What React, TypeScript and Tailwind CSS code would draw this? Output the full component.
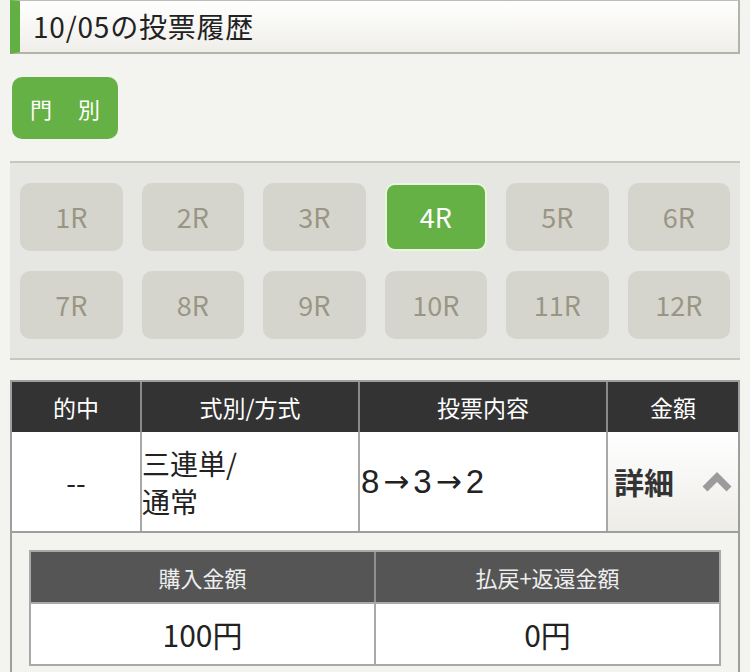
const RACES = ['1R', '2R', '3R', '4R', '5R', '6R', '7R', '8R', '9R', '10R', '11R', '12R'];
const ACTIVE = '4R';

const JP = { fontFamily: '"Noto Sans CJK JP", "Noto Sans", sans-serif' };

function ChevronUp() {
  return (
    <svg width="30" height="20" viewBox="0 0 30 20" className="shrink-0">
      <polyline points="3,17 15,5 27,17" fill="none" stroke="#9b9b9b" strokeWidth="7" strokeLinejoin="miter" />
    </svg>
  );
}

function Arrow() {
  return <span style={{ fontFamily: '"DejaVu Sans", sans-serif' }} className="text-[31px] mx-[4px]">→</span>;
}

export default function App() {
  return (
    <div className="w-[750px] min-h-[672px] bg-[#f3f3ef] text-[#222]" style={JP}>
      {/* title */}
      <div className="ml-[10px] w-[730px] h-[54px] flex items-center pl-[13px] pb-[2px] border-l-[10px] border-l-[#62b044] border-t border-t-[#bdbcb5] border-r-2 border-r-[#b3b2ab] border-b-2 border-b-[#b3b2ab] bg-gradient-to-b from-white to-[#efeee9]">
        <span className="text-[28px] leading-none tracking-[0.8px]">10/05の投票履歴</span>
      </div>

      {/* type tab */}
      <div className="ml-[12px] mt-[23px] w-[106px] h-[62px] rounded-[10px] bg-[#65b145] flex items-center justify-center gap-[26px] text-white text-[22px]">
        <span>門</span>
        <span>別</span>
      </div>

      {/* race selector */}
      <div className="ml-[10px] mt-[22px] w-[730px] bg-[#e6e6e2] border-t-2 border-b-2 border-[#c9c6bd] px-[10px] pt-[20px] pb-[19px] grid grid-cols-6 gap-x-[19px] gap-y-[20px]">
        {RACES.map((r) =>
          r === ACTIVE ? (
            <div
              key={r}
              className="h-[68px] rounded-[10px] bg-[#65b145] border-2 border-[#e9f6de] flex items-center justify-center text-white text-[27px]"
            >
              {r}
            </div>
          ) : (
            <div
              key={r}
              className="h-[68px] rounded-[10px] bg-[#d6d5cd] flex items-center justify-center text-[#9a9686] text-[27px]"
            >
              {r}
            </div>
          )
        )}
      </div>

      {/* history table */}
      <div className="ml-[10px] mt-[20px] w-[730px] border-x-2 border-t-2 border-[#9e9e9e]">
        <div className="flex h-[50px] bg-[#333] text-white text-[23px]">
          <div className="w-[130px] flex items-center justify-center border-r-2 border-[#8a8a8a]">的中</div>
          <div className="w-[218px] flex items-center justify-center border-r-2 border-[#8a8a8a]">式別/方式</div>
          <div className="w-[248px] flex items-center justify-center border-r-2 border-[#8a8a8a]">投票内容</div>
          <div className="flex-1 flex items-center justify-center">金額</div>
        </div>
        <div className="flex h-[101px] border-b-2 border-[#9e9e9e]">
          <div className="w-[130px] bg-white flex items-center justify-center text-[28px] border-r-2 border-[#a8a8a8]">--</div>
          <div className="w-[218px] bg-white flex flex-col justify-center text-[28px] leading-[38px] border-r-2 border-[#a8a8a8]">
            <span>三連単/</span>
            <span>通常</span>
          </div>
          <div
            className="w-[248px] bg-white flex items-center pl-[1px] text-[33px] border-r-2 border-[#a8a8a8]"
            style={{ fontFamily: '"Liberation Sans", Arial, sans-serif' }}
          >
            8<Arrow />3<Arrow />2
          </div>
          <div className="flex-1 bg-gradient-to-b from-white to-[#edece7] flex items-center justify-between pl-[6px] pr-[6px]">
            <span className="text-[30px] font-bold text-[#333]">詳細</span>
            <ChevronUp />
          </div>
        </div>

        {/* detail */}
        <div className="px-[17px] pt-[17px] pb-[10px]">
          <div className="border-2 border-[#a9a9a9]">
            <div className="flex h-[50px] bg-[#555] text-[#eeeeee] text-[22px]">
              <div className="flex-1 flex items-center justify-center border-r-2 border-[#8f8f8f]">購入金額</div>
              <div className="flex-1 flex items-center justify-center">払戻+返還金額</div>
            </div>
            <div className="flex h-[62px] bg-white border-t-2 border-[#a9a9a9] text-[30px]">
              <div className="flex-1 flex items-center justify-center border-r-2 border-[#a9a9a9]">100円</div>
              <div className="flex-1 flex items-center justify-center">0円</div>
            </div>
          </div>
        </div>
      </div>
    </div>
  );
}
